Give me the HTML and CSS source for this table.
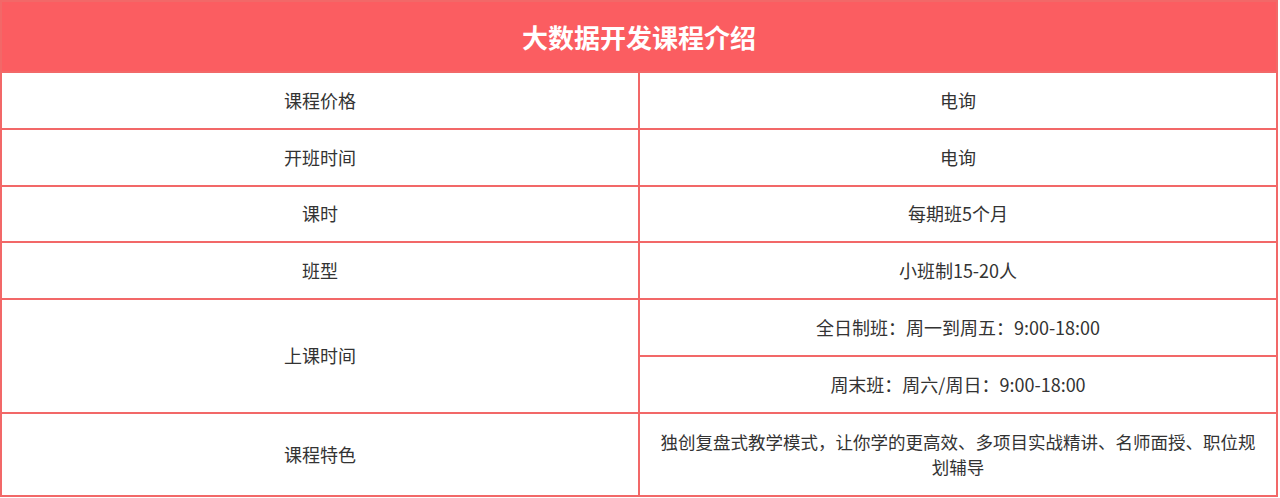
FILE: index.html
```html
<!DOCTYPE html>
<html lang="zh-CN">
<head>
<meta charset="utf-8">
<title>大数据开发课程介绍</title>
<link rel="stylesheet" href="styles.css">
</head>
<body>
<table class="course">
  <colgroup>
    <col class="col-label">
    <col class="col-value">
  </colgroup>
  <thead>
    <tr class="head-row">
      <th colspan="2" class="title">大数据开发课程介绍</th>
    </tr>
  </thead>
  <tbody>
    <tr class="row"><td>课程价格</td><td>电询</td></tr>
    <tr class="row"><td>开班时间</td><td>电询</td></tr>
    <tr class="row"><td>课时</td><td>每期班5个月</td></tr>
    <tr class="row"><td>班型</td><td>小班制15-20人</td></tr>
    <tr class="row"><td rowspan="2">上课时间</td><td>全日制班：周一到周五：9:00-18:00</td></tr>
    <tr class="row"><td>周末班：周六/周日：9:00-18:00</td></tr>
    <tr class="row tall"><td>课程特色</td><td class="wrap">独创复盘式教学模式，让你学的更高效、多项目实战精讲、名师面授、职位规划辅导</td></tr>
  </tbody>
</table>
</body>
</html>
```

FILE: styles.css
```css
html, body {
  margin: 0;
  padding: 0;
  background: #ffffff;
}

.course {
  width: 1278px;
  table-layout: fixed;
  border-collapse: collapse;
  font-family: "Noto Sans CJK SC", "Noto Sans", sans-serif;
  color: #333333;
}

.col-label {
  width: 638px;
}

.course th,
.course td {
  border: 2px solid #f26868;
  text-align: center;
  vertical-align: middle;
  padding: 0 10px;
}

.title {
  height: 69px;
  background: #fb5d61;
  color: #ffffff;
  font-size: 26px;
  font-weight: bold;
  border-color: #ee4f4f;
}

.row td {
  height: 54.8px;
  font-size: 18px;
  line-height: 25px;
}

.row.tall td {
  height: 81px;
}

.row td.wrap {
  padding: 0 20px;
  font-size: 17.5px;
}
```
